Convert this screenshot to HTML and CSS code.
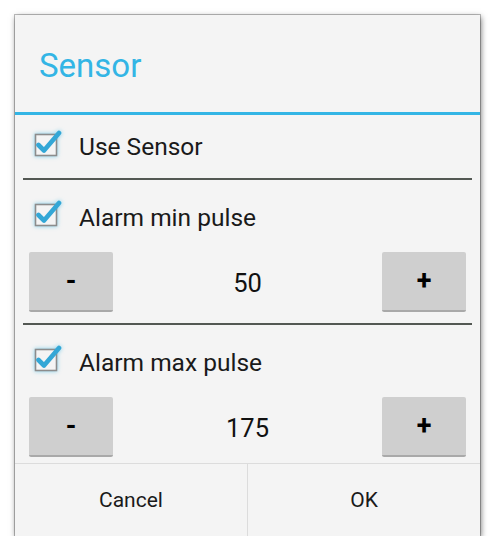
FILE: index.html
```html
<!DOCTYPE html>
<html>
<head>
<meta charset="utf-8">
<link rel="stylesheet" href="styles.css">
</head>
<body>
<div class="dialog">
  <div class="title">Sensor</div>
  <div class="title-rule"></div>
  <div class="content">
    <div class="check-row first">
      <svg class="cb" width="30" height="30" viewBox="0 0 30 30"><rect x="2.5" y="5.5" width="21" height="21" fill="#f4f4f4" stroke="#8c8c8c" stroke-width="1.6"/><path d="M5.5 16 L11 21.5 L26 4" fill="none" stroke="#33a7d6" stroke-width="4.6" stroke-linecap="round" stroke-linejoin="round"/></svg>
      <span class="label">Use Sensor</span>
    </div>
    <div class="divider"></div>
    <div class="check-row">
      <svg class="cb" width="30" height="30" viewBox="0 0 30 30"><rect x="2.5" y="5.5" width="21" height="21" fill="#f4f4f4" stroke="#8c8c8c" stroke-width="1.6"/><path d="M5.5 16 L11 21.5 L26 4" fill="none" stroke="#33a7d6" stroke-width="4.6" stroke-linecap="round" stroke-linejoin="round"/></svg>
      <span class="label">Alarm min pulse</span>
    </div>
    <div class="stepper">
      <div class="btn">-</div>
      <div class="value">50</div>
      <div class="btn">+</div>
    </div>
    <div class="divider"></div>
    <div class="check-row">
      <svg class="cb" width="30" height="30" viewBox="0 0 30 30"><rect x="2.5" y="5.5" width="21" height="21" fill="#f4f4f4" stroke="#8c8c8c" stroke-width="1.6"/><path d="M5.5 16 L11 21.5 L26 4" fill="none" stroke="#33a7d6" stroke-width="4.6" stroke-linecap="round" stroke-linejoin="round"/></svg>
      <span class="label">Alarm max pulse</span>
    </div>
    <div class="stepper last">
      <div class="btn">-</div>
      <div class="value">175</div>
      <div class="btn">+</div>
    </div>
  </div>
  <div class="footer">
    <div class="fbtn">Cancel</div>
    <div class="fbtn">OK</div>
  </div>
</div>
</body>
</html>
```
FILE: styles.css
```css
html, body {
  margin: 0;
  padding: 0;
  background: #ffffff;
}
body {
  padding: 15px 0 0 15px;
  font-family: Roboto, "Liberation Sans", sans-serif;
}
.dialog {
  width: 465px;
  height: 521px;
  background: #f4f4f4;
  box-shadow: 0 0 0 1px rgba(0,0,0,0.25), 1px 2px 6px rgba(0,0,0,0.55);
  display: flex;
  flex-direction: column;
}
.title {
  height: 97px;
  box-sizing: border-box;
  padding: 3px 0 0 24px;
  display: flex;
  align-items: center;
  font-size: 33px;
  color: #33b5e5;
}
.title-rule {
  height: 3px;
  background: #33b5e5;
}
.content {
  height: 348px;
  padding: 0 8px;
}
.check-row {
  height: 72px;
  box-sizing: border-box;
  padding: 2px 0 0 10px;
  display: flex;
  align-items: center;
}
.check-row.first {
  height: 63px;
  padding-top: 0;
}
.cb {
  width: 30px;
  height: 30px;
  margin-top: -6px;
  filter: drop-shadow(0 0 2px rgba(51,181,229,0.6));
}
.label {
  margin-left: 16px;
  font-size: 24.5px;
  color: #1a1a1a;
}
.divider {
  height: 2px;
  background: #535853;
}
.stepper {
  height: 60px;
  margin: 0 6px 11px;
  display: flex;
  align-items: center;
}
.stepper.last {
  margin-bottom: 6px;
}
.btn {
  width: 84px;
  height: 60px;
  box-sizing: border-box;
  background: #cfcfcf;
  border-radius: 2px;
  border-bottom: 2px solid #a9a9a9;
  display: flex;
  align-items: center;
  justify-content: center;
  font-size: 27px;
  font-weight: bold;
  color: #000;
}
.value {
  flex: 1;
  text-align: center;
  font-size: 25.5px;
  color: #111;
  padding-top: 2px;
}
.footer {
  flex: 1;
  border-top: 1px solid #dcdcdc;
  display: flex;
}
.fbtn {
  flex: 1;
  display: flex;
  align-items: center;
  justify-content: center;
  font-size: 21px;
  color: #1a1a1a;
}
.fbtn + .fbtn {
  border-left: 1px solid #dcdcdc;
}
```
